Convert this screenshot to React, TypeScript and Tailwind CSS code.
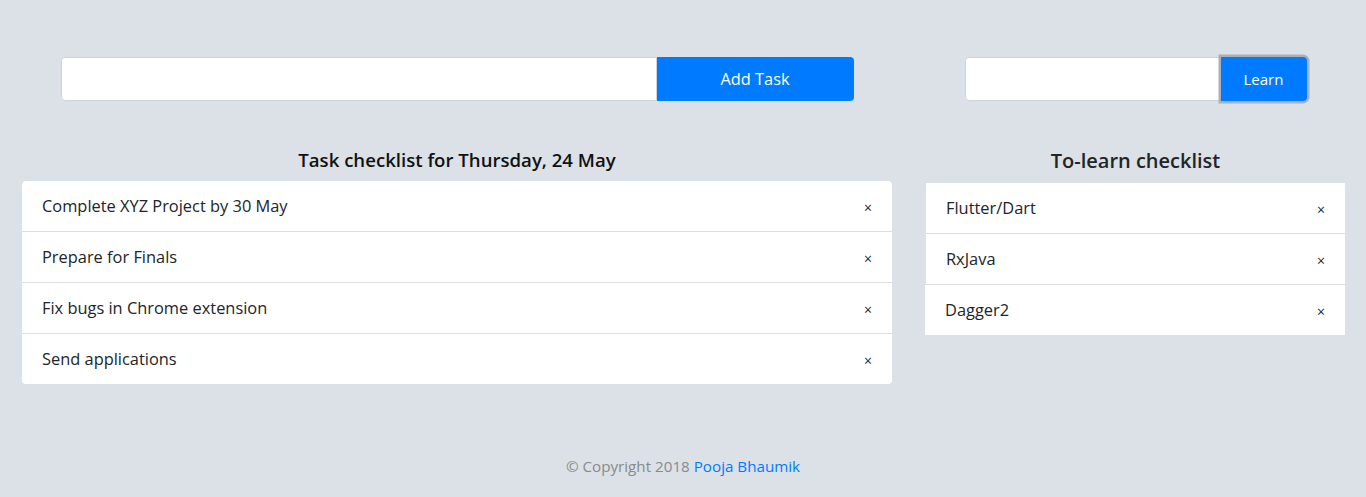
const tasks = [
  "Complete XYZ Project by 30 May",
  "Prepare for Finals",
  "Fix bugs in Chrome extension",
  "Send applications",
];

const learn = ["Flutter/Dart", "RxJava", "Dagger2"];

const Row = ({ text, shift }: { text: string; shift?: boolean }) => (
  <li
    className={`flex h-[50px] items-center justify-between bg-white pl-5 pr-[20px] ${
      shift ? "-ml-px" : ""
    }`}
  >
    <span>{text}</span>
    <span className="pt-[3px] text-[14px] leading-none text-[#1b1e3a]">×</span>
  </li>
);

const App = () => {
  return (
    <div className="min-h-[497px] bg-[#dbe1e7] font-['Open_Sans','Noto_Sans',sans-serif] text-[16.4px] text-[#212529]">
      <div className="flex gap-[34px] pl-[22px] pr-[21px] pt-[57px]">
        <div className="w-[870px]">
          <div className="mx-auto flex h-[44px] w-[793px]">
            <input className="h-full flex-1 rounded-l-[4px] border border-[#ced4da] bg-white outline-none" />
            <button className="h-full w-[197px] rounded-r-[4px] bg-[#007bff] text-white">
              Add Task
            </button>
          </div>
          <h2 className="mt-[46px] mb-[8px] text-center text-[18.6px] font-semibold leading-[26px] text-[#111]">
            Task checklist for Thursday, 24 May
          </h2>
          <ul className="flex flex-col gap-px overflow-hidden rounded-[4px] bg-[#dedede]">
            {tasks.map((t) => (
              <Row key={t} text={t} />
            ))}
          </ul>
        </div>

        <div className="w-[419px]">
          <div className="mx-auto flex h-[44px] w-[342px]">
            <input className="h-full flex-1 rounded-l-[4px] border border-[#ced4da] bg-white outline-none" />
            <button className="h-full w-[86px] rounded-r-[4px] bg-[#007bff] text-[15px] text-white shadow-[0_0_0_2.5px_#aab0b8]">
              Learn
            </button>
          </div>
          <h2 className="mt-[46px] mb-[8px] text-center text-[20px] font-semibold leading-[28px] text-[#212529]">
            To-learn checklist
          </h2>
          <ul className="flex flex-col gap-px rounded-[4px] bg-[#dedede]">
            {learn.map((t, i) => (
              <Row key={t} text={t} shift={i === 2} />
            ))}
          </ul>
        </div>
      </div>

      <footer className="mt-[71px] pb-[19px] text-center text-[15.2px] text-[#8a8a8a]">
        © Copyright 2018 <a className="text-[#007bff]">Pooja Bhaumik</a>
      </footer>
    </div>
  );
};

export default App;
